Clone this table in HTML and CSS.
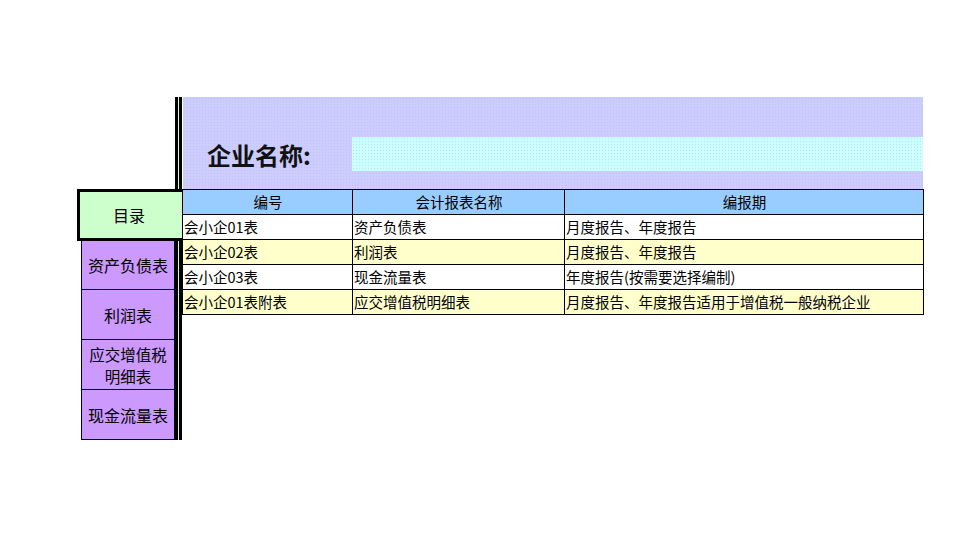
FILE: index.html
```html
<!DOCTYPE html>
<html lang="zh-CN">
<head>
<meta charset="utf-8">
<title>目录</title>
<link rel="stylesheet" href="styles.css">
</head>
<body>
<div class="layout">
  <div class="corner"></div>
  <div class="bar bar-top"></div>
  <div class="tab">目录</div>
  <div class="nav n1">资产负债表</div>
  <div class="nav n2">利润表</div>
  <div class="nav n3"><span>应交增值税</span><span>明细表</span></div>
  <div class="nav n4">现金流量表</div>
  <div class="bar bar-bottom"></div>

  <div class="main">
    <div class="band">
      <div class="title">企业名称:</div>
      <div class="name-input"></div>
    </div>
    <table class="sheet">
      <colgroup>
        <col class="c1"><col class="c2"><col class="c3">
      </colgroup>
      <thead>
        <tr><th>编号</th><th>会计报表名称</th><th>编报期</th></tr>
      </thead>
      <tbody>
        <tr><td>会小企01表</td><td>资产负债表</td><td>月度报告、年度报告</td></tr>
        <tr class="alt"><td>会小企02表</td><td>利润表</td><td>月度报告、年度报告</td></tr>
        <tr><td>会小企03表</td><td>现金流量表</td><td>年度报告(按需要选择编制)</td></tr>
        <tr class="alt"><td>会小企01表附表</td><td>应交增值税明细表</td><td>月度报告、年度报告适用于增值税一般纳税企业</td></tr>
      </tbody>
    </table>
  </div>
</div>
</body>
</html>
```

FILE: styles.css
```css
html, body {
  margin: 0;
  padding: 0;
  background: #ffffff;
}
body {
  width: 960px;
  height: 540px;
  overflow: hidden;
  font-family: "Noto Sans CJK SC", "Noto Sans", sans-serif;
  color: #000;
}
.layout {
  display: grid;
  grid-template-columns: 98px 7px 741px;
  grid-template-rows: 92px 52px 49px 50px 50px 50px;
  margin: 97px 0 0 77px;
}
.corner {
  grid-column: 1;
  grid-row: 1;
  background: #fff;
}
.bar {
  grid-column: 2;
  background: linear-gradient(to right, #000 0 3px, #ccffcc 3px 4px, #000 4px 7px);
}
.bar-top { grid-row: 1; }
.bar-bottom { grid-row: 3 / 7; }
.tab {
  grid-column: 1 / 3;
  grid-row: 2;
  background: #ccffcc;
  border: 3px solid #000;
  border-right: none;
  display: flex;
  align-items: center;
  justify-content: center;
  font-size: 16px;
  padding-right: 4px;
}
.nav {
  grid-column: 1;
  margin-left: 4px;
  background: #cc99ff;
  border: 1px solid #000;
  border-top: none;
  display: flex;
  flex-direction: column;
  align-items: center;
  justify-content: center;
  text-align: center;
  font-size: 16px;
  line-height: 20px;
}
.n3 { font-size: 15.5px; line-height: 22px; }
.n3 span { display: block; }
.n1 { grid-row: 3; }
.n2 { grid-row: 4; }
.n3 { grid-row: 5; }
.n4 { grid-row: 6; }
.main {
  grid-column: 3;
  grid-row: 1 / 7;
  display: flex;
  flex-direction: column;
}
.band {
  height: 92px;
  box-sizing: border-box;
  padding-top: 40px;
  margin-left: 1px;
  display: flex;
  align-items: flex-start;
  background-color: #ccccff;
  background-image: radial-gradient(circle, #c2c2f2 0.7px, transparent 0.8px);
  background-size: 3px 3px;
}
.title {
  width: 169px;
  height: 34px;
  box-sizing: border-box;
  padding-left: 24px;
  font-size: 24px;
  font-weight: bold;
  line-height: 36px;
  color: #111;
}
.name-input {
  flex: 1;
  height: 34px;
  background-color: #ccffff;
  background-image: radial-gradient(circle, #b6e8ec 0.7px, transparent 0.8px);
  background-size: 3px 3px;
}
.sheet {
  width: 741px;
  table-layout: fixed;
  border-collapse: collapse;
  font-size: 14.5px;
}
.c1 { width: 170px; }
.c2 { width: 212px; }
.c3 { width: 359px; }
.sheet th, .sheet td {
  border: 1px solid #000;
  height: 24px;
  padding: 0 0 0 1px;
  white-space: nowrap;
  overflow: hidden;
  line-height: 20px;
}
.sheet th {
  background: #99ccff;
  font-weight: normal;
  text-align: center;
}
.sheet td {
  background: #fff;
  text-align: left;
}
.sheet tr.alt td {
  background: #ffffcc;
}
```
